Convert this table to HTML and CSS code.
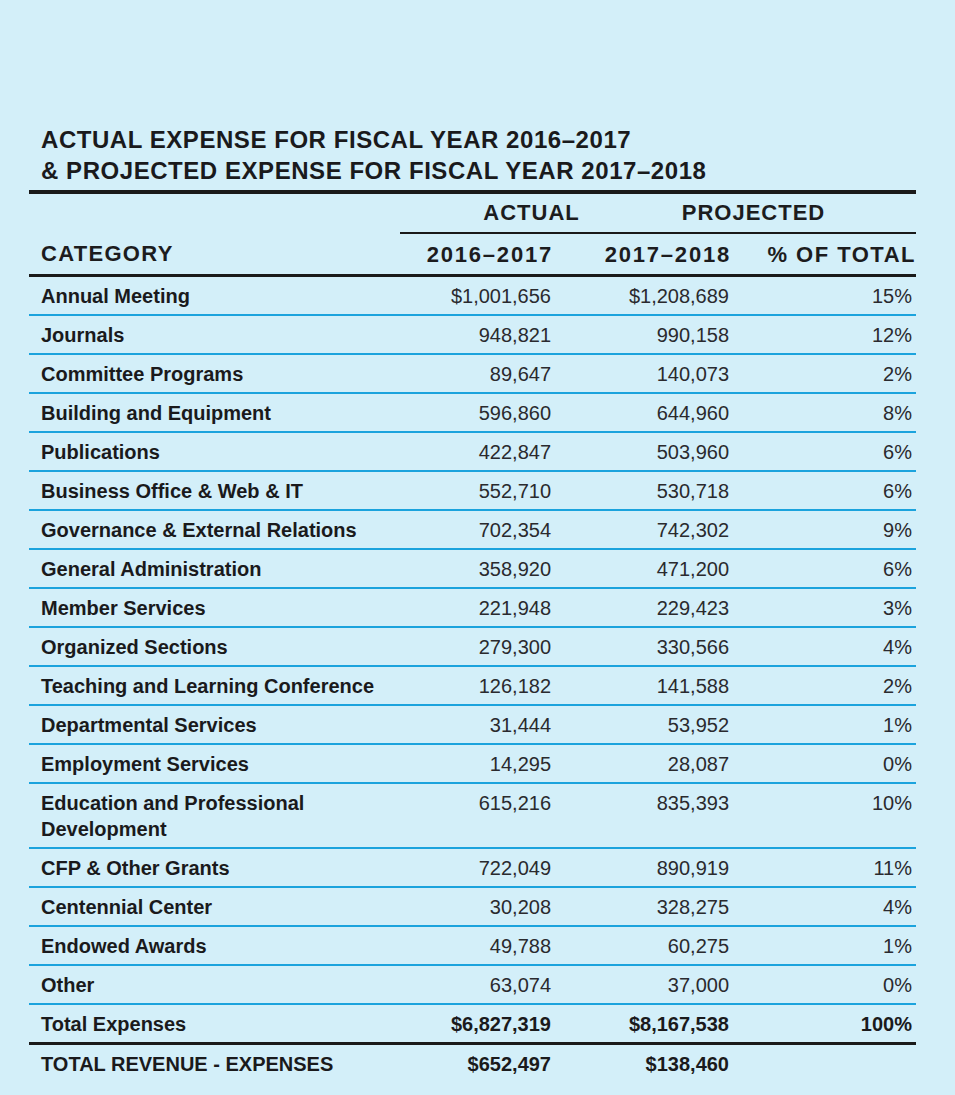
FILE: index.html
```html
<!DOCTYPE html>
<html lang="en">
<head>
<meta charset="utf-8">
<title>Actual and Projected Expense</title>
<link rel="stylesheet" href="styles.css">
</head>
<body>
<div class="page">
  <section class="report">
    <h1 class="title">ACTUAL EXPENSE FOR FISCAL YEAR 2016–2017<br>&amp; PROJECTED EXPENSE FOR FISCAL YEAR 2017–2018</h1>
    <table class="expenses">
      <colgroup>
        <col class="c-cat">
        <col class="c-act">
        <col class="c-proj">
        <col class="c-pct">
      </colgroup>
      <thead>
        <tr class="super">
          <th></th>
          <th colspan="3" class="super-cell">
            <div class="super-labels">
              <span class="lbl-actual">ACTUAL</span>
              <span class="lbl-proj">PROJECTED</span>
            </div>
          </th>
        </tr>
        <tr class="head">
          <th class="cat">CATEGORY</th>
          <th class="num yr">2016–2017</th>
          <th class="num yr">2017–2018</th>
          <th class="num pct">% OF TOTAL</th>
        </tr>
      </thead>
      <tbody>
        <tr><td class="cat">Annual Meeting</td><td class="num">$1,001,656</td><td class="num">$1,208,689</td><td class="num">15%</td></tr>
        <tr><td class="cat">Journals</td><td class="num">948,821</td><td class="num">990,158</td><td class="num">12%</td></tr>
        <tr><td class="cat">Committee Programs</td><td class="num">89,647</td><td class="num">140,073</td><td class="num">2%</td></tr>
        <tr><td class="cat">Building and Equipment</td><td class="num">596,860</td><td class="num">644,960</td><td class="num">8%</td></tr>
        <tr><td class="cat">Publications</td><td class="num">422,847</td><td class="num">503,960</td><td class="num">6%</td></tr>
        <tr><td class="cat">Business Office &amp; Web &amp; IT</td><td class="num">552,710</td><td class="num">530,718</td><td class="num">6%</td></tr>
        <tr><td class="cat">Governance &amp; External Relations</td><td class="num">702,354</td><td class="num">742,302</td><td class="num">9%</td></tr>
        <tr><td class="cat">General Administration</td><td class="num">358,920</td><td class="num">471,200</td><td class="num">6%</td></tr>
        <tr><td class="cat">Member Services</td><td class="num">221,948</td><td class="num">229,423</td><td class="num">3%</td></tr>
        <tr><td class="cat">Organized Sections</td><td class="num">279,300</td><td class="num">330,566</td><td class="num">4%</td></tr>
        <tr><td class="cat">Teaching and Learning Conference</td><td class="num">126,182</td><td class="num">141,588</td><td class="num">2%</td></tr>
        <tr><td class="cat">Departmental Services</td><td class="num">31,444</td><td class="num">53,952</td><td class="num">1%</td></tr>
        <tr><td class="cat">Employment Services</td><td class="num">14,295</td><td class="num">28,087</td><td class="num">0%</td></tr>
        <tr><td class="cat">Education and Professional<br>Development</td><td class="num">615,216</td><td class="num">835,393</td><td class="num">10%</td></tr>
        <tr><td class="cat">CFP &amp; Other Grants</td><td class="num">722,049</td><td class="num">890,919</td><td class="num">11%</td></tr>
        <tr><td class="cat">Centennial Center</td><td class="num">30,208</td><td class="num">328,275</td><td class="num">4%</td></tr>
        <tr><td class="cat">Endowed Awards</td><td class="num">49,788</td><td class="num">60,275</td><td class="num">1%</td></tr>
        <tr><td class="cat">Other</td><td class="num">63,074</td><td class="num">37,000</td><td class="num">0%</td></tr>
        <tr class="total"><td class="cat">Total Expenses</td><td class="num">$6,827,319</td><td class="num">$8,167,538</td><td class="num">100%</td></tr>
        <tr class="net"><td class="cat">TOTAL REVENUE - EXPENSES</td><td class="num">$652,497</td><td class="num">$138,460</td><td class="num"></td></tr>
      </tbody>
    </table>
  </section>
</div>
</body>
</html>
```

FILE: styles.css
```css
html, body {
  margin: 0;
  padding: 0;
  background: #d3eff9;
}

body {
  font-family: "Liberation Sans", Arial, sans-serif;
  color: #1c1c1e;
}

.page {
  min-height: 1095px;
  background: #d3eff9;
}

.report {
  width: 887px;
  margin-left: 29px;
  padding-top: 124px;
}

.title {
  margin: 0 0 4px 0;
  padding-left: 12px;
  font-size: 24px;
  line-height: 31px;
  font-weight: 700;
  letter-spacing: 0.55px;
  color: #1a1a1c;
}

.expenses {
  width: 887px;
  table-layout: fixed;
  border-collapse: collapse;
  border-top: 4px solid #1a1a1a;
}

.c-cat { width: 371px; }
.c-act { width: 155px; }
.c-proj { width: 178px; }
.c-pct { width: 183px; }

.expenses th {
  font-size: 22px;
  line-height: 26px;
  font-weight: 700;
  letter-spacing: 1px;
  padding: 0;
  text-align: left;
  vertical-align: top;
}

.super th {
  padding-top: 6px;
  padding-bottom: 6px;
}

.super-cell {
  border-bottom: 2px solid #1a1a1a;
}

.super-labels {
  display: flex;
}

.lbl-actual {
  width: 263px;
  text-align: center;
}

.lbl-proj {
  width: 181px;
  text-align: center;
}

.head th {
  padding-top: 8px;
  padding-bottom: 6px;
  border-bottom: 3px solid #1a1a1a;
}

.head th.cat {
  padding-left: 12px;
  letter-spacing: 1.3px;
}

.head th.num {
  text-align: right;
  padding-right: 0;
}

.head th.yr {
  letter-spacing: 1.8px;
  padding-right: 2px;
}

.head th.pct {
  letter-spacing: 1.5px;
}

.expenses td {
  font-size: 20px;
  line-height: 26px;
  padding: 6px 0 5px 0;
  vertical-align: top;
  border-bottom: 2px solid #1ba3dd;
}

.expenses td.cat {
  padding-left: 12px;
  font-weight: 700;
  color: #1a1a1c;
}

.expenses td.num {
  text-align: right;
  padding-right: 4px;
  font-weight: 400;
  color: #2a2a2e;
}

.total td {
  border-bottom: 3px solid #1a1a1a;
}

.total td.num {
  font-weight: 700;
  color: #1a1a1c;
}

.net td {
  border-bottom: none;
}

.net td.num {
  font-weight: 700;
  color: #1a1a1c;
}
```
